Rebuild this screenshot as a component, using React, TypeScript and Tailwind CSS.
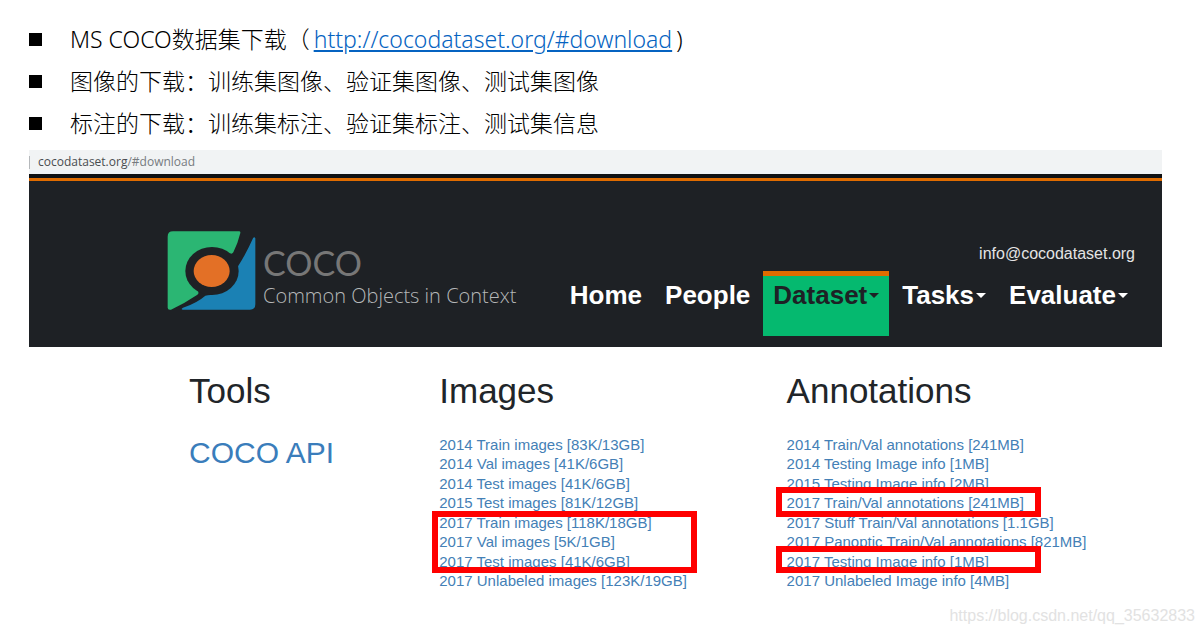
const imageLinks = [
  '2014 Train images [83K/13GB]',
  '2014 Val images [41K/6GB]',
  '2014 Test images [41K/6GB]',
  '2015 Test images [81K/12GB]',
  '2017 Train images [118K/18GB]',
  '2017 Val images [5K/1GB]',
  '2017 Test images [41K/6GB]',
  '2017 Unlabeled images [123K/19GB]',
]

const annotationLinks = [
  '2014 Train/Val annotations [241MB]',
  '2014 Testing Image info [1MB]',
  '2015 Testing Image info [2MB]',
  '2017 Train/Val annotations [241MB]',
  '2017 Stuff Train/Val annotations [1.1GB]',
  '2017 Panoptic Train/Val annotations [821MB]',
  '2017 Testing Image info [1MB]',
  '2017 Unlabeled Image info [4MB]',
]

function Bullet({ children }: { children: React.ReactNode }) {
  return (
    <li className="flex items-center whitespace-nowrap">
      <span className="mr-7 h-[13px] w-[13px] bg-black" />
      <span>{children}</span>
    </li>
  )
}

function Logo() {
  return (
    <svg viewBox="50 46 267 237" className="h-[79px] w-[89px]" aria-hidden="true">
      <path
        fill="#2bb673"
        d="M68 47H266Q271 47 270 52Q262 85 249 110Q245 117 238 113L143 228Q147 233 140 238Q100 265 62 282Q52 284 52 276V63Q52 47 68 47Z"
      />
      <path
        fill="#1b81b4"
        d="M315 68V266Q315 282 299 282H98Q90 281 98 276Q140 262 165 240Q175 237 185 238L264 150Q288 113 308 68Q312 62 315 68Z"
      />
      <ellipse cx="185" cy="166" rx="80" ry="72" fill="#1e2125" />
      <ellipse cx="184" cy="166" rx="54" ry="48" fill="#e37026" />
    </svg>
  )
}

function Caret() {
  return (
    <span className="ml-[2px] border-x-[5px] border-t-[5px] border-x-transparent border-t-current" />
  )
}

function NavMenu({ label, active }: { label: string; active?: boolean }) {
  return (
    <button
      className={
        active
          ? 'flex h-[65px] items-center border-t-[5px] border-[#e06c00] bg-[#05b96f] px-[10px] pb-[21px] text-[#1e2125]'
          : 'flex h-[65px] items-center border-t-[5px] border-transparent px-[10px] pb-[21px]'
      }
    >
      {label}
      <Caret />
    </button>
  )
}

function NavLink({ label }: { label: string }) {
  return (
    <a
      href="#"
      className="flex h-[65px] items-center border-t-[5px] border-transparent px-[10px] pb-[21px]"
    >
      {label}
    </a>
  )
}

function LinkList({
  links,
  children,
}: {
  links: string[]
  children?: React.ReactNode
}) {
  return (
    <div className="relative mt-6">
      <ul className="grid h-[155px] content-between text-[15px] leading-[19px] whitespace-nowrap text-[#4480b6]">
        {links.map((link) => (
          <li key={link}>
            <a href="#">{link}</a>
          </li>
        ))}
      </ul>
      {children}
    </div>
  )
}

export default function App() {
  return (
    <div className="bg-white font-['Liberation_Sans',sans-serif]">
      <ul className="pt-[18px] pl-[29px] font-['Noto_Sans','Noto_Sans_CJK_SC',sans-serif] text-[23px] leading-[42px] font-light text-black">
        <Bullet>
          MS COCO数据集下载（
          <a href="http://cocodataset.org/#download" className="mx-1 text-[#0563c1] underline">
            http://cocodataset.org/#download
          </a>
          )
        </Bullet>
        <Bullet>图像的下载：训练集图像、验证集图像、测试集图像</Bullet>
        <Bullet>标注的下载：训练集标注、验证集标注、测试集信息</Bullet>
      </ul>

      <div className="mt-[6px] mr-[41px] ml-[29px]">
        <div className="flex h-6 items-center bg-[#f1f3f4] font-['Open_Sans',sans-serif] text-[12px] text-[#777b7f]">
          <span className="mr-2 h-[13px] w-px bg-[#b5b8bb]" />
          <span>
            <span className="text-[#4a4d50]">cocodataset.org</span>/#download
          </span>
        </div>

        <header className="border-t-4 border-[#101113] bg-[#1e2125]">
          <div className="h-[3px] bg-[#e06c00]" />
          <div className="flex items-start justify-between pt-[50px] pr-6 pb-[11px] pl-[138px]">
            <a href="#" className="flex whitespace-nowrap">
              <Logo />
              <span className="flex flex-col pt-[13px] pl-[7px]">
                <span className="font-['Lato',sans-serif] text-[34px] leading-[38px] text-[#777777]">
                  COCO
                </span>
                <span className="font-['Open_Sans',sans-serif] text-[20px] leading-7 font-light text-[#b5b7b8]">
                  Common Objects in Context
                </span>
              </span>
            </a>
            <div className="flex flex-col items-end">
              <a
                href="mailto:info@cocodataset.org"
                className="mt-[13px] mr-[3px] text-[16px] leading-5 text-[#e4e4e4]"
              >
                info@cocodataset.org
              </a>
              <nav className="mt-[7px] flex gap-[3px] text-[26px] font-bold text-white">
                <NavLink label="Home" />
                <NavLink label="People" />
                <NavMenu label="Dataset" active />
                <NavMenu label="Tasks" />
                <NavMenu label="Evaluate" />
              </nav>
            </div>
          </div>
        </header>

        <main className="grid grid-cols-[250fr_347fr_375fr] pt-6 pl-[160px] text-[#212529]">
          <section>
            <h2 className="text-[35px] leading-10">Tools</h2>
            <a href="#" className="mt-6 block text-[30px] leading-9 text-[#3a7dbb]">
              COCO API
            </a>
          </section>
          <section>
            <h2 className="text-[35px] leading-10">Images</h2>
            <LinkList links={imageLinks}>
              <div className="absolute top-[76px] -left-[7px] h-[62px] w-[265px] border-[6px] border-[#ff0000]" />
            </LinkList>
          </section>
          <section>
            <h2 className="text-[35px] leading-10">Annotations</h2>
            <LinkList links={annotationLinks}>
              <div className="absolute top-[52px] -left-[11px] h-[30px] w-[265px] border-[6px] border-[#ff0000]" />
              <div className="absolute top-[111px] -left-[11px] h-[27px] w-[265px] border-[6px] border-[#ff0000]" />
            </LinkList>
          </section>
        </main>
      </div>

      <footer className="pt-4 pr-2 text-right text-[16px] leading-5 text-[#e2e2e2]">
        https://blog.csdn.net/qq_35632833
      </footer>
    </div>
  )
}
